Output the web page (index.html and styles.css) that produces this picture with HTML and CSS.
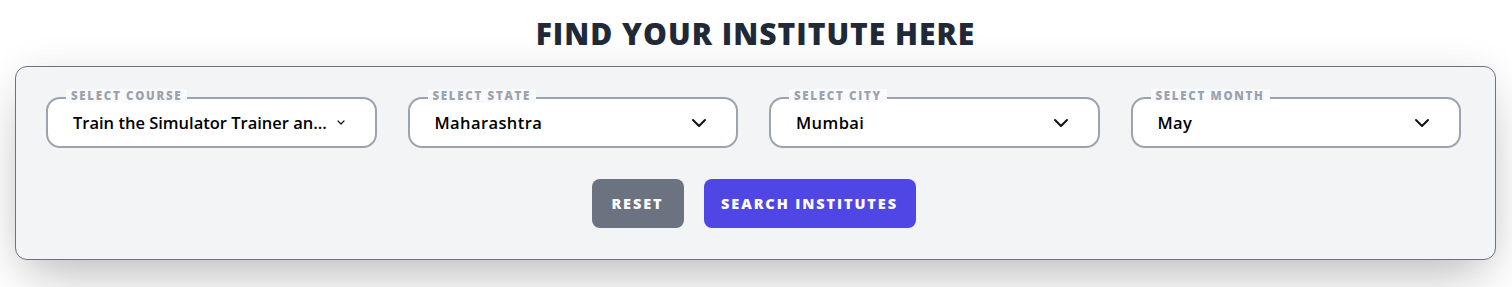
FILE: index.html
```html
<!DOCTYPE html>
<html>
<head>
<meta charset="utf-8">
<link rel="stylesheet" href="styles.css">
</head>
<body>
<div class="page">
  <h1 class="title">FIND YOUR INSTITUTE HERE</h1>
  <div class="panel">
    <div class="fields">
      <div class="field">
        <span class="label">SELECT COURSE</span>
        <div class="select select-course">
          <span class="value value-course">Train the Simulator Trainer an...</span>
          <svg class="chev small" viewBox="0 0 8 5" width="8" height="5"><path d="M1 1l3 3 3-3" fill="none" stroke="#111" stroke-width="1.2" stroke-linecap="round" stroke-linejoin="round"/></svg>
        </div>
      </div>
      <div class="field">
        <span class="label">SELECT STATE</span>
        <div class="select">
          <span class="value">Maharashtra</span>
          <svg class="chev" viewBox="0 0 16 10" width="16" height="10"><path d="M2 2l6 6 6-6" fill="none" stroke="#111" stroke-width="2" stroke-linecap="round" stroke-linejoin="round"/></svg>
        </div>
      </div>
      <div class="field">
        <span class="label">SELECT CITY</span>
        <div class="select">
          <span class="value">Mumbai</span>
          <svg class="chev" viewBox="0 0 16 10" width="16" height="10"><path d="M2 2l6 6 6-6" fill="none" stroke="#111" stroke-width="2" stroke-linecap="round" stroke-linejoin="round"/></svg>
        </div>
      </div>
      <div class="field">
        <span class="label">SELECT MONTH</span>
        <div class="select">
          <span class="value">May</span>
          <svg class="chev" viewBox="0 0 16 10" width="16" height="10"><path d="M2 2l6 6 6-6" fill="none" stroke="#111" stroke-width="2" stroke-linecap="round" stroke-linejoin="round"/></svg>
        </div>
      </div>
    </div>
    <div class="actions">
      <button class="btn reset">RESET</button>
      <button class="btn search">SEARCH INSTITUTES</button>
    </div>
  </div>
</div>
</body>
</html>
```
FILE: styles.css
```css
* { box-sizing: border-box; }
html, body { margin: 0; padding: 0; background: #ffffff; }
body { font-family: "Open Sans", "Liberation Sans", sans-serif; }
.page { padding: 14px 16px 27px 15px; }
.title {
  margin: 0;
  text-align: center;
  font-family: "Open Sans", sans-serif;
  font-weight: 800;
  font-size: 30px;
  line-height: 40px;
  color: #1f2937;
  letter-spacing: 1px;
}
.panel {
  margin-top: 12px;
  background: #f3f4f6;
  border: 1px solid #6b7280;
  border-radius: 12px;
  padding: 30px 34px 31px 30px;
  box-shadow: 0 25px 50px -12px rgba(0,0,0,0.25), 0 0 40px rgba(0,0,0,0.06);
  height: 194px;
}
.fields {
  display: grid;
  grid-template-columns: repeat(4, 1fr);
  column-gap: 31px;
}
.field { position: relative; min-width: 0; }
.label {
  position: absolute;
  left: 20px;
  top: -8px;
  padding: 0 5px;
  background: #f9fafb;
  font-size: 11.5px;
  font-weight: 800;
  letter-spacing: 1.7px;
  color: #9ca3af;
  line-height: 14px;
}
.select {
  height: 51px;
  background: #fff;
  border: 2px solid #9ca3af;
  border-radius: 14px;
  display: flex;
  align-items: center;
  justify-content: space-between;
  padding: 0 29px 0 25px;
}
.select-course {
  justify-content: flex-start;
  gap: 10px;
}
.value {
  font-size: 16.5px;
  font-weight: 600;
  letter-spacing: 0.4px;
  color: #000;
  white-space: nowrap;
}
.value-course { letter-spacing: 0; }
.chev { flex-shrink: 0; }
.actions {
  margin-top: 31px;
  display: flex;
  justify-content: center;
  gap: 20px;
}
.btn {
  border: none;
  height: 49px;
  border-radius: 8px;
  color: #fff;
  font-family: "Open Sans", sans-serif;
  font-weight: 800;
  font-size: 14.5px;
  letter-spacing: 1.9px;
  padding: 0;
}
.reset { width: 92px; background: #6b7280; }
.search { width: 212px; background: #4f46e5; }
```
